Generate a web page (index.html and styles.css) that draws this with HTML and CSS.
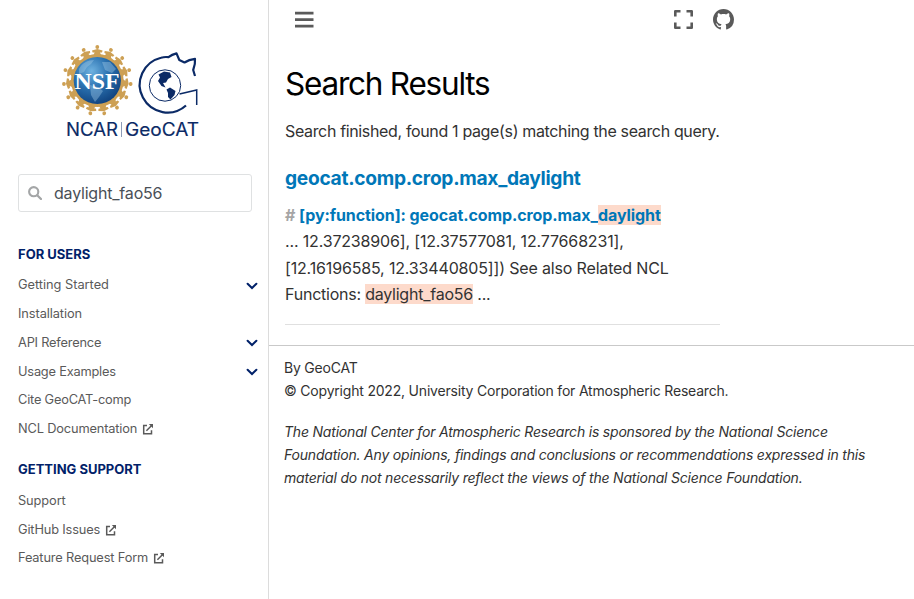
FILE: index.html
```html
<!DOCTYPE html>
<html lang="en">
<head>
<meta charset="utf-8">
<title>Search Results</title>
<link rel="stylesheet" href="styles.css">
</head>
<body>
<svg width="0" height="0" class="defs">
  <symbol id="ext" viewBox="0 0 12 12"><path d="M5 2.600H1.700V10.700H9.500V7.300M4.400 7.800L9.900 2.200" fill="none" stroke="currentColor" stroke-width="1.500"/><path d="M6.800.9H11V5.200Z" fill="currentColor"/></symbol>
  <symbol id="chev" viewBox="0 0 12 8"><path d="M1.600 1.700L6 6L10.400 1.700" fill="none" stroke="currentColor" stroke-width="2" stroke-linecap="round"/></symbol>
</svg>
<div class="page">
  <aside class="sidebar">
    <a class="logo">
      <svg width="160" height="110" viewBox="50 35 160 110">
        <defs>
          <radialGradient id="globe" cx=".38" cy=".3" r=".8"><stop offset="0" stop-color="#6fb2e0"/><stop offset=".45" stop-color="#2a71b0"/><stop offset="1" stop-color="#0b3a76"/></radialGradient>
          <g id="fig"><circle cx="97.300" cy="47" r="1.900"/><path d="M92 50.500L97.300 49L102.600 50.500L102 52.500L100 52.600L100.800 54.500L104 57.500H90.600L93.800 54.500L94.600 52.600L92.600 52.500Z"/></g>
        </defs>
        <g fill="#cda054">
          <circle cx="97.300" cy="80.500" r="26.400"/>
          <use href="#fig"/><use href="#fig" transform="rotate(24 97.3 80.5)"/><use href="#fig" transform="rotate(48 97.3 80.5)"/><use href="#fig" transform="rotate(72 97.3 80.5)"/><use href="#fig" transform="rotate(96 97.3 80.5)"/><use href="#fig" transform="rotate(120 97.3 80.5)"/><use href="#fig" transform="rotate(144 97.3 80.5)"/><use href="#fig" transform="rotate(168 97.3 80.5)"/><use href="#fig" transform="rotate(192 97.3 80.5)"/><use href="#fig" transform="rotate(216 97.3 80.5)"/><use href="#fig" transform="rotate(240 97.3 80.5)"/><use href="#fig" transform="rotate(264 97.3 80.5)"/><use href="#fig" transform="rotate(288 97.3 80.5)"/><use href="#fig" transform="rotate(312 97.3 80.5)"/><use href="#fig" transform="rotate(336 97.3 80.5)"/>
        </g>
        <circle cx="97.300" cy="80.500" r="23.600" fill="url(#globe)"/>
        <path d="M79 69C82 63 88 60 94 60L91 64L87 67L84 72L79 74ZM102 62L110 62L116 69L112 73L105 70ZM90 85L98 87L103 91L99 97L95 102L91 95Z" fill="#a6cce8" opacity=".4"/>
        <text x="97" y="89" class="nsf" text-anchor="middle" textLength="45" lengthAdjust="spacingAndGlyphs">NSF</text>
        <g fill="none" stroke="#0b2a66" stroke-width="2.200" stroke-linejoin="round">
          <path d="M186 105.500A27.800 27.800 0 1 1 161 57.700Q165 56.600 168.500 57.200Q172 54.500 176.500 53.400L179.300 60L184.500 62.500Q189 59.500 195 58.800Q195.500 64 193.200 70L195 76"/>
          <path d="M179.500 94L196.700 90V105" stroke-width="1.500" stroke-linejoin="miter"/>
        </g>
        <circle cx="165" cy="85.500" r="15.700" fill="none" stroke="#0b2a66" stroke-width="1"/>
        <path d="M158.500 74.500L164 71.500L170 72.500L171.500 77L168 79L166 82.500L163 83L165.500 87.500L161.500 86L158 81L160 77.500ZM166.500 89.500L170 87.500L175.500 91L174.500 95L170.500 99.500L168 97V93Z" fill="#0b2a66"/>
        <text x="66" y="136" class="brand" textLength="52" lengthAdjust="spacingAndGlyphs">NCAR</text>
        <path d="M121.500 122V137" stroke="#8d9cb8" stroke-width="1"/>
        <text x="125" y="136" class="brand" textLength="74" lengthAdjust="spacingAndGlyphs">GeoCAT</text>
      </svg>
    </a>
    <form class="search">
      <svg width="14" height="14" viewBox="0 0 14 14"><circle cx="5.700" cy="5.700" r="4.600" fill="none" stroke="#a4a6a7" stroke-width="2.100"/><path d="M9.200 9.200L13 13" stroke="#a4a6a7" stroke-width="2.300" stroke-linecap="round"/></svg>
      <span class="query">daylight_fao56</span>
    </form>
    <nav class="nav">
      <p class="caption">FOR USERS</p>
      <ul>
        <li><a class="n1">Getting Started</a><svg class="chev"><use href="#chev"/></svg></li>
        <li><a class="n2">Installation</a></li>
        <li><a class="n3">API Reference</a><svg class="chev"><use href="#chev"/></svg></li>
        <li><a class="n3">Usage Examples</a><svg class="chev"><use href="#chev"/></svg></li>
        <li><a class="n3">Cite GeoCAT-comp</a></li>
        <li><a class="n4">NCL Documentation</a><svg class="ext"><use href="#ext"/></svg></li>
      </ul>
      <p class="caption support">GETTING SUPPORT</p>
      <ul>
        <li><a class="n2">Support</a></li>
        <li><a class="n4">GitHub Issues</a><svg class="ext"><use href="#ext"/></svg></li>
        <li><a class="n4">Feature Request Form</a><svg class="ext"><use href="#ext"/></svg></li>
      </ul>
    </nav>
  </aside>
  <div class="main">
    <header class="topbar">
      <svg width="19" height="17" viewBox="0 0 19 17"><path d="M0 2.200H18.500M0 8.700H18.500M0 15.200H18.500" stroke="#5a5a5a" stroke-width="2.700"/></svg>
      <div class="tools">
        <svg width="19" height="19" viewBox="0 0 19 19"><path d="M1.300 6.500V1.300H6.500M12.500 1.300H17.700V6.500M17.700 12.500V17.700H12.500M6.500 17.700H1.300V12.500" fill="none" stroke="#5a5a5a" stroke-width="2.600" stroke-linejoin="round"/></svg>
        <svg width="21" height="21" viewBox="0 0 16 16"><path fill="#5a5a5a" d="M8 0C3.580 0 0 3.580 0 8c0 3.540 2.290 6.530 5.470 7.590.4.070.55-.17.55-.38 0-.19-.01-.82-.01-1.490-2.010.37-2.530-.49-2.690-.94-.09-.23-.48-.94-.82-1.130-.28-.15-.68-.52-.01-.53.63-.01 1.080.58 1.230.82.72 1.210 1.870.87 2.330.66.070-.52.28-.87.51-1.070-1.780-.2-3.640-.89-3.640-3.950 0-.87.31-1.590.82-2.150-.08-.2-.36-1.020.08-2.120 0 0 .67-.21 2.200.82.64-.18 1.320-.27 2-.27s1.360.09 2 .27c1.530-1.040 2.200-.82 2.200-.82.44 1.100.16 1.920.08 2.120.51.56.82 1.270.82 2.150 0 3.070-1.870 3.750-3.650 3.950.29.25.54.73.54 1.480 0 1.070-.01 1.930-.01 2.200 0 .21.15.46.55.38A8.010 8.010 0 0 0 16 8c0-4.420-3.580-8-8-8z"/></svg>
      </div>
    </header>
    <main class="content">
      <h1>Search Results</h1>
      <p class="status">Search finished, found 1 page(s) matching the search query.</p>
      <h2>geocat.comp.crop.max_daylight</h2>
      <p class="entry"><span class="hash">#</span><a>[py:function]: geocat.comp.crop.max_<mark>daylight</mark></a></p>
      <p class="ctx">... 12.37238906], [12.37577081, 12.77668231],</p>
      <p class="ctx">[12.16196585, 12.33440805]]) See also Related NCL</p>
      <p class="ctx last">Functions: <mark>daylight_fao56</mark> ...</p>
    </main>
    <footer>
      <p>By GeoCAT</p>
      <p>© Copyright 2022, University Corporation for Atmospheric Research.</p>
      <p class="disclaimer"><i>The National Center for Atmospheric Research is sponsored by the National Science</i></p>
      <p><i>Foundation. Any opinions, findings and conclusions or recommendations expressed in this</i></p>
      <p><i>material do not necessarily reflect the views of the National Science Foundation.</i></p>
    </footer>
  </div>
</div>
</body>
</html>
```
FILE: styles.css
```css
* { box-sizing: border-box; }
body, h1, h2, p, ul { margin: 0; padding: 0; }
body { font-family: Inter, "Liberation Sans", sans-serif; color: #323232; background: #fff; overflow: hidden; }
.defs { display: block; }
.page { display: flex; height: 599px; }
.sidebar { width: 269px; border-right: 1px solid #dcdcdc; padding: 35px 10px 0 18px; }
.logo { display: block; height: 139px; margin-left: 32px; }
.nsf { font: bold 23px "Liberation Serif", serif; fill: #fff; }
.brand { font: 400 18px Inter, sans-serif; fill: #0b2a66; stroke: #0b2a66; stroke-width: .15px; }
.search { display: flex; align-items: center; width: 234px; height: 38px; border: 1px solid #dfe1e2; border-radius: 3px; padding-left: 9px; }
.query { margin-left: 12px; font-size: 16px; letter-spacing: -.2px; color: #495057; }
.nav { padding-top: 29.600px; }
.caption { height: 24px; line-height: 24px; font-size: 13px; font-weight: 700; color: #012169; white-space: nowrap; }
.support { margin-top: 14.200px; }
ul { list-style: none; padding-top: 4.700px; }
li { display: flex; align-items: center; height: 28.800px; font-size: 12.800px; color: #5a5a5a; white-space: nowrap; }
.n1 { letter-spacing: -.02px; }
.n2 { letter-spacing: -.09px; }
.n3 { letter-spacing: -.2px; }
.n4 { letter-spacing: -.15px; }
.chev { width: 12px; height: 8px; margin: 2px 0 0 auto; color: #012169; }
.ext { width: 12px; height: 12px; margin: 1px 0 0 5px; }
.main { flex: 1; }
.topbar { display: flex; align-items: center; justify-content: space-between; width: 465px; height: 38px; padding: 0 0 0 26px; }
.tools { display: flex; align-items: center; gap: 20px; }
.content { width: 435px; height: 287px; margin-left: 16px; border-bottom: 1px solid #e0e0e0; white-space: nowrap; }
h1 { padding-top: 25px; line-height: 42px; font-size: 31.500px; font-weight: 400; color: #000; letter-spacing: -1.220px; }
.status { margin-top: 13px; line-height: 26px; font-size: 16px; letter-spacing: -.35px; }
h2 { margin-top: 21px; line-height: 26px; font-size: 19.200px; font-weight: 700; color: #0077b8; letter-spacing: -.3px; }
.entry { margin-top: 11px; line-height: 26px; font-size: 16px; font-weight: 700; color: #0077b8; letter-spacing: -.09px; }
.hash { color: #a5a5a5; margin-right: 3.700px; }
.ctx { line-height: 26.500px; font-size: 16px; letter-spacing: -.16px; }
.last { letter-spacing: -.23px; }
mark { background: #fddacb; color: inherit; }
footer { margin-top: 20px; border-top: 1px solid #c9c9c9; padding: 10px 0 0 15px; font-size: 14px; line-height: 23px; white-space: nowrap; letter-spacing: -.2px; }
.disclaimer { margin-top: 18px; }
```
